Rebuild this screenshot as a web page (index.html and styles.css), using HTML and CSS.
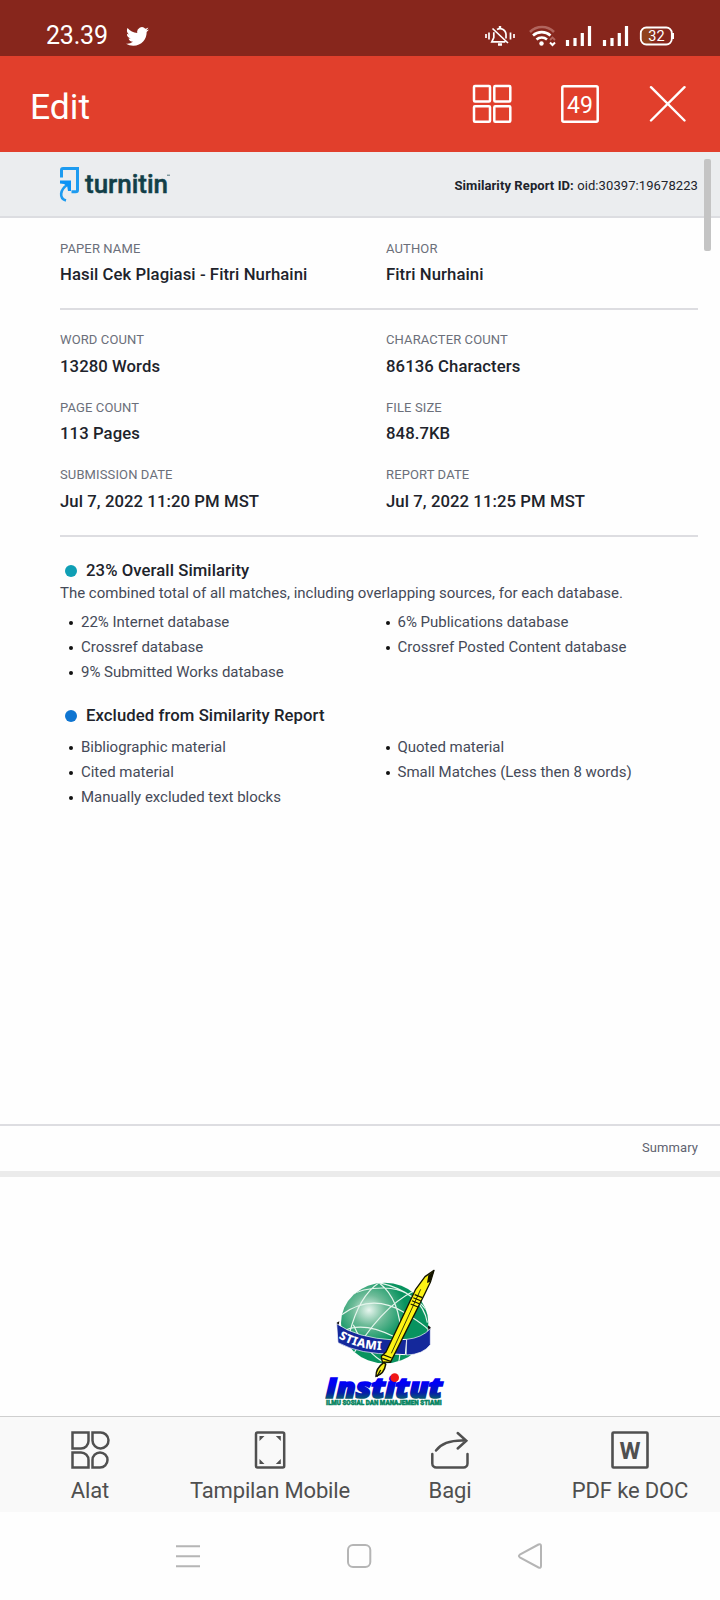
FILE: index.html
```html
<!DOCTYPE html>
<html lang="id">
<head>
<meta charset="utf-8">
<title>Edit</title>
<link rel="stylesheet" href="styles.css">
</head>
<body>
<header class="status">
  <span class="clock">23.39</span>
  <svg class="bird" width="23" height="19" viewBox="0 2 24 20" preserveAspectRatio="none"><path fill="#fff" d="M23.95 4.57a10 10 0 0 1-2.82.77 4.96 4.96 0 0 0 2.16-2.72c-.95.55-2 .95-3.13 1.18a4.92 4.92 0 0 0-8.38 4.48C7.69 8.09 4.07 6.13 1.64 3.16a4.82 4.82 0 0 0-.67 2.48c0 1.71.87 3.21 2.19 4.1a4.9 4.9 0 0 1-2.23-.62v.06a4.92 4.92 0 0 0 3.95 4.83 5 5 0 0 1-2.21.08 4.94 4.94 0 0 0 4.6 3.42A9.87 9.87 0 0 1 0 19.54a14 14 0 0 0 7.55 2.21c9.05 0 14-7.5 14-13.98 0-.21 0-.42-.02-.63a9.94 9.94 0 0 0 2.42-2.57z"/></svg>
  <svg class="indicators" width="190" height="22" viewBox="484 25 190 22" fill="none" stroke="#fff">
    <g stroke-width="1.7">
      <path d="M486 34v4M489 32.5v7M510.500 32.500v7M514 34v4"/>
      <path d="M497 29.500a6 6 0 0 1 9 4.500v4.500M493.800 32.200v5.300l-2 4.300h13.500M492.500 28.500l15.500 14.500"/>
      <path d="M500 26v2M498 44.500h4" stroke-width="2.400"/>
    </g>
    <path d="M530 32a17 17 0 0 1 24 0" stroke="#b1655d" stroke-width="2.600"/>
    <path d="M533 35.500a13 13 0 0 1 17.500 0M536.500 39.500a8 8 0 0 1 10.500 0" stroke-width="2.600"/>
    <circle cx="541.500" cy="43.500" r="2.200" fill="#fff" stroke="none"/>
    <path d="M550 40l2.500-2.500 2.500 2.500" stroke="#b1655d" stroke-width="1.800"/>
    <path d="M550 42.500l2.500 2.500 2.500-2.500" stroke-width="2"/>
    <path d="M567.500 40v6M575 38v8M582.300 33v13M589.500 26v20M604.500 40v6M612 38v8M619.300 33v13M626.500 26v20" stroke-width="3.200"/>
    <rect x="641.500" y="28" width="11" height="16" rx="4" fill="#90411d" stroke="none"/>
    <rect x="640.800" y="27.500" width="31" height="17" rx="5.500" stroke-width="1.800"/>
    <path d="M673 33v6" stroke-width="2"/>
    <text x="656.400" y="41" class="battery">32</text>
  </svg>
</header>

<nav class="toolbar">
  <h1 class="title">Edit</h1>
  <svg class="tools" width="214" height="40" viewBox="472 84 214 40" fill="none" stroke="#fff" stroke-width="2.500">
    <rect x="474" y="86" width="16" height="15.500" rx="1"/><rect x="494.300" y="86" width="16" height="15.500" rx="1"/>
    <rect x="474" y="106.200" width="16" height="15.500" rx="1"/><rect x="494.300" y="106.200" width="16" height="15.500" rx="1"/>
    <rect x="562.300" y="86.300" width="35.400" height="35.400" rx="1.500" stroke-width="2.500"/>
    <text x="580" y="113" class="pages">49</text>
    <path d="M651 87.200L684.500 120.500M684.500 87.200L651 120.500" stroke-linecap="round" stroke-width="2.400"/>
  </svg>
</nav>

<main class="viewer">
  <span class="scrollbar"></span>
  <section class="band">
    <svg class="brand" width="112" height="36" viewBox="58 166 112 36">
      <g fill="none" stroke="#1d9bf0" stroke-width="3">
        <path d="M61.500 177.500v-7.500q0-1.500 1.500-1.500h14.500v21.500q0 1.800-1.800 1.800h-4.200"/>
        <path d="M66 200.500c-7-2-6.500-11 2-16" stroke-width="2.600"/>
      </g>
      <path fill="#0d93f5" d="M60 180.500h11v10.500h-3l-.8-4.800-3.200-2.200-4-.500z"/>
      <text x="85" y="193" class="wordmark" textLength="83" lengthAdjust="spacingAndGlyphs">turnitin</text>
      <path d="M167 175.200h3" stroke="#52757b"/>
    </svg>
    <p class="report-id"><b>Similarity Report ID:</b> oid:30397:19678223</p>
  </section>

  <dl class="facts facts-name">
    <div><dt>PAPER NAME</dt><dd>Hasil Cek Plagiasi - Fitri Nurhaini</dd></div>
    <div><dt>AUTHOR</dt><dd>Fitri Nurhaini</dd></div>
  </dl>
  <dl class="facts facts-counts">
    <div><dt>WORD COUNT</dt><dd>13280 Words</dd></div>
    <div><dt>CHARACTER COUNT</dt><dd>86136 Characters</dd></div>
    <div><dt>PAGE COUNT</dt><dd>113 Pages</dd></div>
    <div><dt>FILE SIZE</dt><dd>848.7KB</dd></div>
    <div><dt>SUBMISSION DATE</dt><dd>Jul 7, 2022 11:20 PM MST</dd></div>
    <div><dt>REPORT DATE</dt><dd>Jul 7, 2022 11:25 PM MST</dd></div>
  </dl>

  <section class="matches">
    <h2 class="teal">23% Overall Similarity</h2>
    <p class="lead">The combined total of all matches, including overlapping sources, for each database.</p>
    <div class="lists">
      <ul><li>22% Internet database</li><li>Crossref database</li><li>9% Submitted Works database</li></ul>
      <ul><li>6% Publications database</li><li>Crossref Posted Content database</li></ul>
    </div>
    <h2 class="blue">Excluded from Similarity Report</h2>
    <div class="lists lists-excluded">
      <ul><li>Bibliographic material</li><li>Cited material</li><li>Manually excluded text blocks</li></ul>
      <ul><li>Quoted material</li><li>Small Matches (Less then 8 words)</li></ul>
    </div>
  </section>
  <footer class="page-foot">Summary</footer>

  <section class="next-page">
    <svg width="122" height="140" viewBox="45 40 366 420">
      <defs>
        <radialGradient id="sea" cx=".32" cy=".34" r=".42"><stop offset="0" stop-color="#e8f6ef"/><stop offset=".45" stop-color="#6dbb98"/><stop offset="1" stop-color="#08935f"/></radialGradient>
        <linearGradient id="ink" x1="0" y1="0" x2="0" y2="1"><stop offset=".4" stop-color="#0000f5"/><stop offset=".65" stop-color="#061cab"/><stop offset=".85" stop-color="#056b65"/></linearGradient>
        <clipPath id="ball"><ellipse cx="224" cy="205" rx="131" ry="121"/></clipPath>
      </defs>
      <path d="M88 200l-8 4 4 18zM352 210l10 8-4 20z" fill="#111"/>
      <ellipse cx="224" cy="205" rx="131" ry="121" fill="url(#sea)"/>
      <g clip-path="url(#ball)" fill="none" stroke="#e5f5ec" stroke-width="3.500">
        <path d="M120 124q35-25 105-24t125 66M95 180q90-65 185-8t75 65M90 235q60-40 160 10t70 70M207 84q-60 40-88 150M207 84q70 55 65 180t-42 70M207 84q130 30 145 120M130 210q40 90 100 117M310 110q-100 50-190 205"/>
      </g>
      <path d="M80 207q60 43 172 49l4 42Q150 300 84 264z" fill="#14289b" stroke="#fff" stroke-width="2"/>
      <path d="M252 256l38-2-4 46-38-2z" fill="#14289b" stroke="#fff" stroke-width="3"/>
      <path d="M290 254q45-4 71-32v48q-22 30-72 31z" fill="#14289b" stroke="#fff" stroke-width="2"/>
      <path id="ribbon" d="M85 250Q145 287 240 287" fill="none"/>
      <text class="stiami"><textPath href="#ribbon">STIAMI</textPath></text>
      <path d="M372 47l-27 19-28 38-89 188-14 13 3 17 24 1 12-23 91-182 17-35z" fill="#fdf314" stroke="#141400" stroke-width="4" stroke-linejoin="round"/>
      <path d="M332 104L244 296" fill="none" stroke="#141400" stroke-width="2.500"/>
      <path d="M355 62l18-15-12 34-10 4z" fill="#141400"/>
      <path d="M302 148l22 9M306 138l22 9M310 129l22 9M314 120l23 9M219 300l26 10M217 311l25 9" stroke="#141400" stroke-width="3.500"/>
      <path d="M222 323q-25 18-24 42 25-8 29-36z" fill="#f7ef18" stroke="#141400" stroke-width="4.500"/>
      <path d="M212 346l-11 20" stroke="#141400" stroke-width="4"/>
      <text x="47" y="429" class="institut" textLength="351" lengthAdjust="spacingAndGlyphs">Institut</text>
      <circle cx="254" cy="369" r="13" fill="#f01616"/>
      <text x="48" y="450" class="ilmu" textLength="347" lengthAdjust="spacingAndGlyphs">ILMU SOSIAL DAN MANAJEMEN STIAMI</text>
    </svg>
  </section>
</main>

<nav class="actions">
  <div class="action">
    <svg width="40" height="40" viewBox="0 0 40 40"><path d="M2.500 2.500h16v8.500a7.500 7.500 0 0 1-7.500 7.500h-8.500zM22.500 2.500h7.500a8 8 0 1 1-7.500 8zM2.500 22.500h8.500a7.500 7.500 0 0 1 7.500 7.500v7.500h-16zM22.500 37.500v-7.500a7.500 7.500 0 1 1 7.500 7.500z"/></svg>
    <span>Alat</span>
  </div>
  <div class="action">
    <svg width="40" height="40" viewBox="0 0 40 40"><rect x="6" y="2.500" width="28.200" height="35" rx="1.500"/><path class="solid" d="M9.500 6h5l-5 5zM30.800 6h-5l5 5zM9.500 34v-5l5 5zM30.800 34v-5l-5 5z"/></svg>
    <span>Tampilan Mobile</span>
  </div>
  <div class="action">
    <svg width="40" height="40" viewBox="0 0 40 40" stroke-linecap="round"><path d="M2.300 24v9.500a4 4 0 0 0 4 4h27.200a4 4 0 0 0 4-4V24M6 20.500Q14.500 9.500 36 10.700M27.700 3L36.300 10.700 27.700 18.500"/></svg>
    <span>Bagi</span>
  </div>
  <div class="action">
    <svg width="40" height="40" viewBox="0 0 40 40"><rect x="2.500" y="2.500" width="35" height="35" rx="1" stroke-width="2.600"/><text x="20" y="28.700" class="word">W</text></svg>
    <span>PDF ke DOC</span>
  </div>
</nav>
<nav class="system">
  <svg width="24" height="26" viewBox="0 0 24 26"><path d="M0 3.200h24M0 13.200h24M0 23.200h24"/></svg>
  <svg width="26" height="26" viewBox="0 0 26 26"><rect x="2" y="2" width="22.300" height="22" rx="5"/></svg>
  <svg width="26" height="28" viewBox="0 0 26 28"><path d="M21.500 1.500L2.800 11.700q-1.800 1.300 0 2.600L21.500 24.500q2.500.800 2.500-1.500V3q0-2.300-2.500-1.500z"/></svg>
</nav>
</body>
</html>
```
FILE: styles.css
```css
* { box-sizing: border-box; }
body { margin: 0; width: 720px; height: 1600px; overflow: hidden; background: #fefefe; font-family: Roboto, "Liberation Sans", sans-serif; }
h1, h2, p, dl, dd, ul { margin: 0; padding: 0; }
svg { display: block; flex: none; }

.status { height: 56px; display: flex; align-items: flex-start; background: #87261c; color: #fff; padding: 0 46px; }
.clock { width: 80px; padding-top: 20px; font-size: 25px; line-height: 32px; letter-spacing: -0.2px; }
.bird { margin-top: 27px; }
.indicators { margin: 25px 0 0 335px; }
.battery { fill: #fff; stroke: none; font-size: 14.5px; text-anchor: middle; }

.toolbar { height: 96px; display: flex; justify-content: space-between; align-items: flex-start; background: #e13f2c; color: #fff; padding: 28px 34px 0 30px; }
.title { padding-top: 2px; font-size: 35.5px; line-height: 42px; font-weight: 400; }
.pages { fill: #fff; stroke: none; font-size: 23px; text-anchor: middle; }

.viewer { position: relative; height: 1264px; overflow: hidden; }
.scrollbar { position: absolute; left: 704px; top: 7px; width: 7px; height: 92px; border-radius: 2px; background: #c4c4c4; }
.band { height: 66px; display: flex; justify-content: space-between; align-items: flex-start; padding: 14px 22px 0 58px; background: #ebedef; border-bottom: 2px solid #dcdde1; }
.wordmark { font-family: Roboto, sans-serif; font-weight: 500; font-size: 26px; fill: #123f48; stroke: #123f48; stroke-width: 0.5px; }
.report-id { padding-top: 11px; font-size: 13px; line-height: 18px; letter-spacing: 0.09px; color: #20232b; }
.report-id b { font-weight: 700; }

.facts { display: grid; grid-template-columns: 326px 312px; align-content: start; margin: 0 22px 0 60px; border-bottom: 2px solid #dddde1; }
.facts-name { height: 92px; padding-top: 22px; }
.facts-counts { height: 227px; padding-top: 21px; grid-auto-rows: 67.5px; }
.facts dt { font-size: 13px; line-height: 18px; letter-spacing: 0.12px; color: #6b6f7a; }
.facts dd { margin-top: 6px; font-size: 16.7px; line-height: 22px; letter-spacing: 0.08px; font-weight: 500; color: #20232b; }
.facts-counts dd { margin-top: 6.6px; }

.matches { height: 587px; padding: 23px 22px 0 60px; }
.matches h2 { display: flex; align-items: center; gap: 9px; padding-left: 5px; font-size: 16.7px; line-height: 22px; letter-spacing: 0.08px; font-weight: 500; color: #20232b; }
.matches h2::before { content: ""; width: 12px; height: 12px; border-radius: 50%; }
.teal::before { background: #0f9fb5; }
.blue::before { background: #0f75d1; }
.lead { font-size: 15px; line-height: 22px; letter-spacing: -0.01px; color: #454a58; }
.lists { display: grid; grid-template-columns: 316.5px 1fr; margin: 6px 0 20px; }
.lists ul { list-style: none; padding-left: 9px; }
.lists li { display: flex; align-items: center; gap: 8px; font-size: 15px; line-height: 25px; letter-spacing: -0.02px; color: #454a58; }
.lists li::before { content: ""; width: 4px; height: 4px; border-radius: 50%; background: #111; }
.lists-excluded { margin-top: 8px; }
.page-foot { height: 53px; padding: 12px 22px 0; border-top: 2px solid #dddde1; border-bottom: 6px solid #ebebeb; font-size: 13px; line-height: 20px; letter-spacing: 0.08px; text-align: right; color: #5f6370; }
.next-page { padding: 91px 0 0 325px; }
.stiami { font-family: "Noto Sans", sans-serif; font-weight: 800; font-size: 36px; letter-spacing: 1px; fill: #fff; }
.institut { font-family: "Open Sans", sans-serif; font-weight: 800; font-style: italic; font-size: 82px; fill: url(#ink); stroke: url(#ink); stroke-width: 5px; }
.ilmu { font-weight: 900; font-size: 19px; fill: #078461; stroke: #078461; stroke-width: 1.5px; }

.actions { height: 96px; display: grid; grid-template-columns: repeat(4, 1fr); background: #f9f9f9; border-top: 1px solid #cfcfcf; }
.action { display: flex; flex-direction: column; align-items: center; padding-top: 13px; color: #4f4f4f; }
.action svg { fill: none; stroke: #505050; stroke-width: 2.5px; }
.action .solid { fill: #505050; stroke: none; }
.action .word { fill: #505050; stroke: none; font-weight: 700; font-size: 24px; text-anchor: middle; }
.action span { margin-top: 7px; font-size: 22px; line-height: 28px; letter-spacing: -0.15px; white-space: nowrap; }
.system { height: 88px; display: flex; align-items: flex-start; justify-content: space-between; padding: 31px 177px 0 176px; }
.system svg { fill: none; stroke: #b5b5b5; stroke-width: 2px; }
```
